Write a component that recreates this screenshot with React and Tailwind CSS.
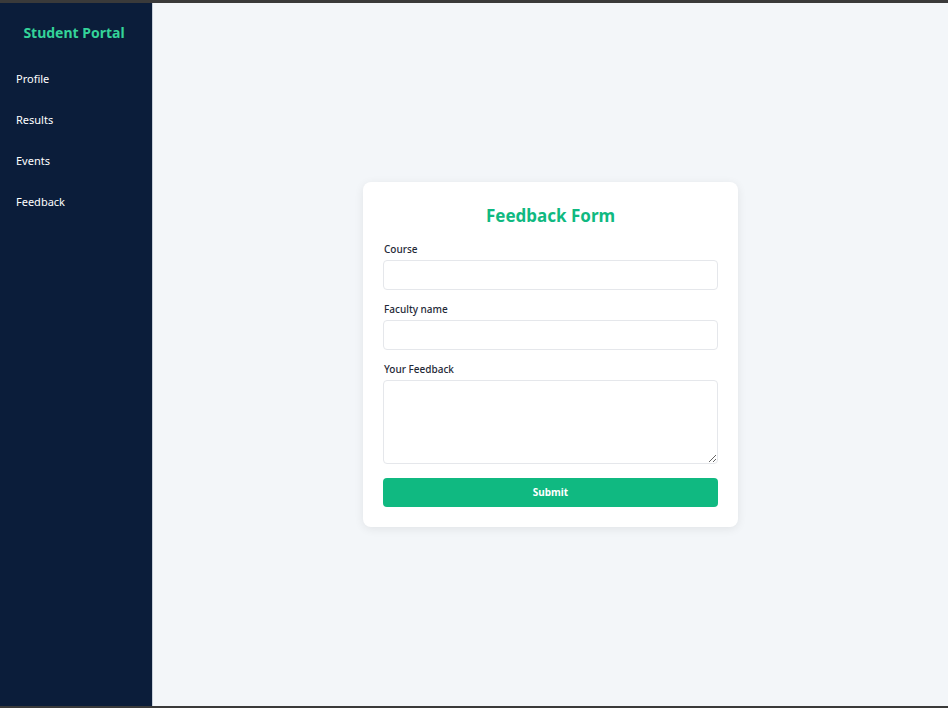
import React, { useState } from 'react';

const links = ['Profile', 'Results', 'Events', 'Feedback'];

const App = () => {
  const [course, setCourse] = useState('');
  const [faculty, setFaculty] = useState('');
  const [feedback, setFeedback] = useState('');

  return (
    <div
      className="flex flex-col h-[708px] w-[948px] bg-[#3a3a3a]"
      style={{ fontFamily: '"Noto Sans", "Open Sans", sans-serif' }}
    >
      <div className="flex flex-1 mt-[3px] mb-[2px]">
        {/* sidebar */}
        <aside className="w-[153px] bg-[#0b1d3a] border-r border-[#c8d0da] flex flex-col">
          <h1 className="mt-[20px] pr-[4px] text-center text-[14px] font-bold text-[#34d399] leading-[20px]">
            Student Portal
          </h1>
          <nav className="mt-[27px] flex flex-col gap-[24px] pl-4">
            {links.map((l) => (
              <a key={l} href="#" className="text-[11px] leading-[17px] text-white">
                {l}
              </a>
            ))}
          </nav>
        </aside>

        {/* main */}
        <main className="flex-1 bg-[#f3f6f9] flex items-center justify-center">
          <form
            className="w-[375px] bg-white rounded-lg shadow-[0_2px_10px_rgba(0,0,0,0.08)] px-5 pt-[22px] pb-5"
            onSubmit={(e) => e.preventDefault()}
          >
            <h2 className="text-center text-[17px] font-bold text-[#10b981] leading-[24px]">
              Feedback Form
            </h2>
            <div className="mt-[14px]">
              <label className="block pl-px text-[10px] font-medium text-[#1f2937] leading-[14px] mb-[4px]">Course</label>
              <input
                type="text"
                className="w-full h-[30px] rounded border border-[#e5e7eb] outline-none px-2 text-[11px]"
                value={course}
                onChange={(e) => setCourse(e.target.value)}
              />
            </div>
            <div className="mt-[12px]">
              <label className="block pl-px text-[10px] font-medium text-[#1f2937] leading-[14px] mb-[4px]">Faculty name</label>
              <input
                type="text"
                className="w-full h-[30px] rounded border border-[#e5e7eb] outline-none px-2 text-[11px]"
                value={faculty}
                onChange={(e) => setFaculty(e.target.value)}
              />
            </div>
            <div className="mt-[12px]">
              <label className="block pl-px text-[10px] font-medium text-[#1f2937] leading-[14px] mb-[4px]">Your Feedback</label>
              <textarea
                className="block w-full h-[84px] rounded border border-[#e5e7eb] outline-none px-2 py-1 text-[11px]"
                value={feedback}
                onChange={(e) => setFeedback(e.target.value)}
              />
            </div>
            <button
              type="submit"
              className="mt-[14px] w-full h-[29px] rounded bg-[#10b981] text-white text-[10px] font-bold"
            >
              Submit
            </button>
          </form>
        </main>
      </div>
    </div>
  );
};

export default App;
